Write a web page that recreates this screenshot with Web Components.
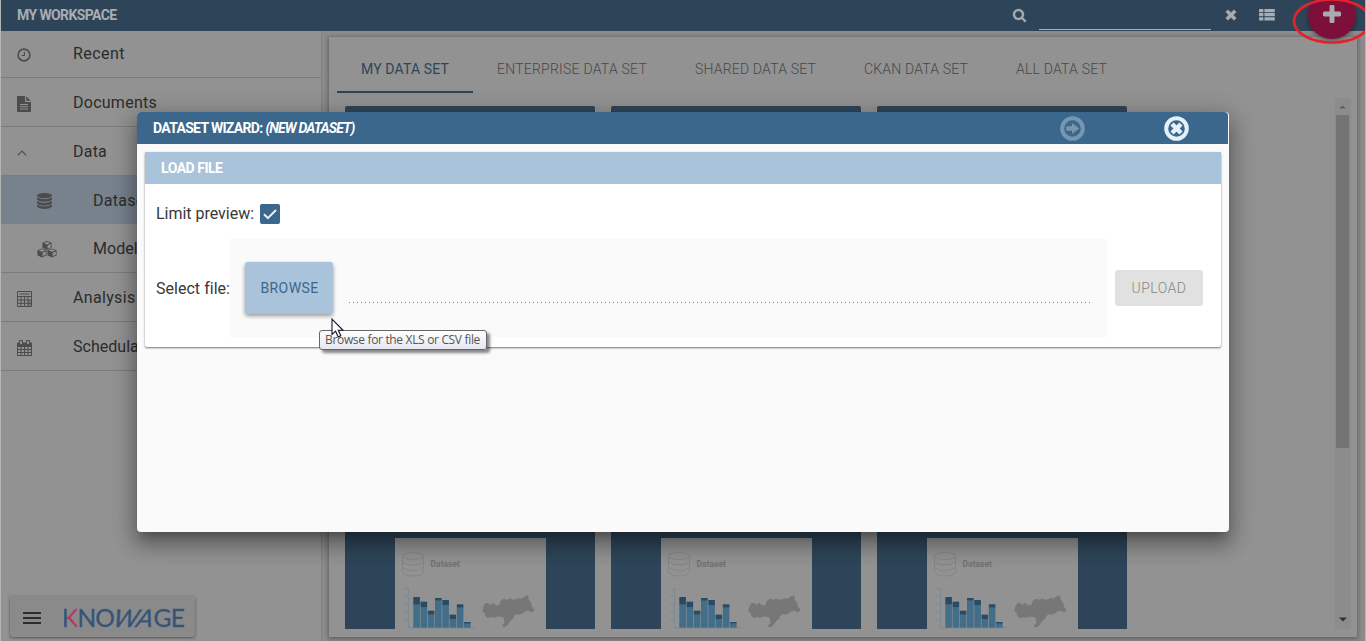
<!DOCTYPE html>
<html lang="en"><head><meta charset="utf-8"><title>My Workspace</title>
<style>html,body{margin:0;height:100%;overflow:hidden;background:#8e8e8e;font-family:Roboto,sans-serif}</style></head>
<body><workspace-app></workspace-app>
<script>
const define=(name,html,setup)=>customElements.define(name,class extends HTMLElement{
  connectedCallback(){ if(this.shadowRoot)return; const r=this.attachShadow({mode:'open'});
    const t=document.createElement('template'); t.innerHTML=typeof html==='function'?html(this):html;
    r.append(t.content.cloneNode(true)); if(setup)setup(this,r); }});

/* A single-line label whose tracking is adjusted to a given width. */
define('fit-text','<style>:host{display:inline-block;white-space:nowrap}</style><slot></slot>',el=>{
  const w=+el.getAttribute('w'); if(!w)return;
  el.style.letterSpacing='0px';
  el.style.letterSpacing=((w-el.getBoundingClientRect().width)/el.textContent.length).toFixed(3)+'px';
});

const cube=(x,y)=>`<g transform="translate(${x} ${y})"><path d="M5 0L9.6 1.8V6.8L5 9L.4 6.8V1.8z" fill="currentColor"/><path d="M5 .9L8.3 2.1L5 3.4L1.7 2.1z M5.6 4.4L8.8 3.1V6.2L5.6 7.8z" fill="#949494"/></g>`;
const ICONS={
 clock:['0 0 14 14','<circle cx="7" cy="7" r="5.9" fill="none" stroke="currentColor" stroke-width="1.6"/><path d="M7.4 3.8V7.5H4.7" fill="none" stroke="currentColor" stroke-width="1.1"/>'],
 file:['0 0 14 16','<path fill="currentColor" fill-rule="evenodd" d="M0 .8Q0 0 .8 0H8V5.1Q8 6 9 6H14V15.2Q14 16 13.2 16H.8Q0 16 0 15.2zM3 8V9H11V8zM3 10.3V11.3H11V10.3zM3 12.6V13.6H11V12.6zM9.2 .2L13.8 4.8H9.2z"/>'],
 chevron:['0 0 10 6','<path d="M.7 5.3L5 1L9.3 5.3" fill="none" stroke="currentColor" stroke-width="1.2"/>'],
 database:['0 0 14 16','<g fill="currentColor"><ellipse cx="7" cy="2.6" rx="7" ry="2.6"/><path d="M0 4.2Q3 6.2 7 6.2T14 4.200V6.600Q12.500 8.800 7 8.800T0 6.600z"/><path d="M0 8Q3 9.900 7 9.900T14 8V10.200Q12.500 12.400 7 12.400T0 10.200z"/><path d="M0 11.700Q3 13.500 7 13.500T14 11.700V13.600Q12.500 16 7 16T0 13.600z"/></g>'],
 cubes:['0 0 20 17',cube(5,0)+cube(0,7.4)+cube(10,7.4)],
 calc:['0 0 15 16','<path d="M.5 .5H14.500V15.500H.5zM.5 5.500H14.500M.5 9H14.500M.5 12.300H14.500M4 5.500V15.500M7.500 5.500V15.500M11 5.500V15.500M2.500 3H12.500" fill="none" stroke="currentColor"/><path d="M11 9H14.500V15.500H11z" fill="currentColor" opacity=".35"/>'],
 calendar:['0 0 15 16','<path d="M.5 3H14.500V15.500H.5zM.5 6.500H14.500M.5 9.500H14.500M.5 12.500H14.500M4 6.500V15.500M7.500 6.500V15.500M11 6.500V15.500" fill="none" stroke="currentColor"/><path d="M.5 3H14.500V6H.5z" fill="currentColor"/><path d="M2.500 .5H5.500V4.500H2.500zM9.500 .5H12.500V4.500H9.500z" fill="#929292" stroke="currentColor"/>'],
 search:['64 128 1664 1664','<path fill="currentColor" stroke="currentColor" stroke-width="40" d="M1216 832q0-185-131.5-316.5t-316.5-131.5-316.5 131.5-131.5 316.5 131.5 316.5 316.5 131.5 316.5-131.5 131.5-316.5zm512 832q0 52-38 90t-90 38q-54 0-90-38l-343-342q-179 124-399 124-143 0-273.5-55.5t-225-150-150-225-55.5-273.5 55.500-273.500 150-225 225-150 273.500-55.500 273.500 55.500 225 150 150 225 55.500 273.500q0 220-124 399l343 343q37 37 37 90z"/>'],
 times:['302 366 1188 1188','<path fill="currentColor" stroke="currentColor" stroke-width="60" d="M1490 1322q0 40-28 68l-136 136q-28 28-68 28t-68-28l-294-294-294 294q-28 28-68 28t-68-28l-136-136q-28-28-28-68t28-68l294-294-294-294q-28-28-28-68t28-68l136-136q28-28 68-28t68 28l294 294 294-294q28-28 68-28t68 28l136 136q28 28 28 68t-28 68l-294 294 294 294q28 28 28 68z"/>'],
 list:['0 0 16 12','<g fill="currentColor"><rect width="4.400" height="3.200" rx=".5"/><rect y="4.100" width="4.400" height="3.200" rx=".5"/><rect y="8.200" width="4.400" height="3.200" rx=".5"/><rect x="5.400" width="10.400" height="3.200" rx=".5"/><rect x="5.400" y="4.100" width="10.400" height="3.200" rx=".5"/><rect x="5.400" y="8.200" width="10.400" height="3.200" rx=".5"/></g>'],
 plus:['192 128 1408 1408','<path fill="currentColor" d="M1600 736v192q0 40-28 68t-68 28h-416v416q0 40-28 68t-68 28h-192q-40 0-68-28t-28-68v-416h-416q-40 0-68-28t-28-68v-192q0-40 28-68t68-28h416v-416q0-40 28-68t68-28h192q40 0 68 28t28 68v416h416q40 0 68 28t28 68z"/>'],
 next:['0 0 25 25','<circle cx="12.500" cy="12.500" r="10.300" fill="none" stroke="currentColor" stroke-width="4"/><path d="M6.300 10.200H12V7L19.300 12.500L12 18V14.800H6.300z" fill="currentColor"/>'],
 close:['0 0 25 25','<circle cx="12.500" cy="12.500" r="10.300" fill="none" stroke="currentColor" stroke-width="4"/><path d="M9.600 9.600L15.400 15.400M15.400 9.600L9.600 15.400" stroke="currentColor" stroke-width="4.500" stroke-linecap="square"/>'],
 check:['0 0 20 20','<path d="M4 10.300L7.900 14.200L16 6" fill="none" stroke="#e6f2fb" stroke-width="2"/>'],
 menu:['0 0 18 12','<path d="M0 1H18M0 6H18M0 11H18" stroke="currentColor" stroke-width="2"/>'],
 up:['0 0 8 5','<path d="M0 4.500L4 .5L8 4.500z" fill="currentColor"/>'],
 down:['0 0 8 5','<path d="M0 .5H8L4 4.500z" fill="currentColor"/>'],
 pointer:['0 0 13 21','<path d="M1 1V16.500L4.600 13.200L7.200 19L9.800 17.800L7.300 12.300H12z" fill="#fff" stroke="#111827" stroke-width="1.100"/>']
};
define('ui-icon',el=>{const [vb,body]=ICONS[el.getAttribute('name')];
 return `<style>:host{display:block;flex:none;width:${el.getAttribute('w')}px;height:${el.getAttribute('h')}px}svg{display:block;width:100%;height:100%;overflow:visible}</style><svg viewBox="${vb}" preserveAspectRatio="none" aria-hidden="true">${body}</svg>`});

define('nav-row',el=>`<style>:host{display:flex;box-sizing:border-box;height:49px;border-bottom:1px solid #7c7c7c;align-items:center;color:#4c4c4c;padding-left:16px;font-size:16px}
 :host([first]){height:47px}:host([sub]){padding-left:36px}
 :host([active]){background:#77828c;border-color:#77828c;height:48px}
 .i{width:56px;padding-top:3px}span{color:#2c2c2c}:host([first]) .i{padding-top:2px}:host([first]) span{padding-bottom:2px}:host([active]) span{padding-top:1px}</style>
 <div class="i"><ui-icon name="${el.getAttribute('icon')}" w="${el.getAttribute('iw')}" h="${el.getAttribute('ih')}"></ui-icon></div><span><slot></slot></span>`);

define('brand-bar',`<style>:host{display:flex;box-sizing:border-box;width:185px;height:41px;background:#8a8a8a;border-radius:3px;box-shadow:0 1px 3px #444c;align-items:center;padding:2px 0 0 13px;color:#2c2c2c}
 .logo{margin-left:21px;font:400 24.500px/26px Lato,sans-serif;color:#355478;white-space:nowrap;-webkit-text-stroke:.3px #355478}
 .k{color:transparent;-webkit-text-stroke:.3px transparent;background:linear-gradient(90deg,#355478 5px,#b43868 5px);-webkit-background-clip:text;background-clip:text}
 .w{display:inline-block;transform:skewX(-20deg)}</style>
 <ui-icon name="menu" w="18" h="12"></ui-icon><fit-text class="logo" w="122"><span class="k">K</span>NO<span class="w">WA</span>GE</fit-text>`);

define('side-nav',`<style>:host{display:flex;flex-direction:column;box-sizing:border-box;width:321px;background:#929292;border-right:1px solid #818181}
 nav{flex:1}brand-bar{margin:0 0 4px 9px}</style><nav>
 <nav-row first icon="clock" iw="14" ih="14"><fit-text w="52">Recent</fit-text></nav-row>
 <nav-row icon="file" iw="14" ih="16"><fit-text w="84">Documents</fit-text></nav-row>
 <nav-row icon="chevron" iw="10" ih="6"><fit-text w="34">Data</fit-text></nav-row>
 <nav-row sub active icon="database" iw="15" ih="16"><fit-text w="57">Dataset</fit-text></nav-row>
 <nav-row sub icon="cubes" iw="20" ih="17"><fit-text w="53">Models</fit-text></nav-row>
 <nav-row icon="calc" iw="15" ih="16"><fit-text w="62.500">Analysis</fit-text></nav-row>
 <nav-row icon="calendar" iw="15" ih="16"><fit-text w="93">Schedulation</fit-text></nav-row></nav><brand-bar></brand-bar>`);

define('top-bar',`<style>:host{display:flex;height:31px;background:#2e4559;color:#a9adb1;align-items:center;padding-left:16px;flex:none}
 b{font-weight:700;font-size:14px;margin-right:auto;padding-bottom:1px}.line{width:172px;height:29px;border-bottom:1px solid #adb1b5;margin:-1px 15px 0 13px}
 ui-icon{margin-bottom:1px}.x{margin-right:23px}.l{margin-right:33px}
 .fab{width:48px;height:48px;border-radius:50%;background:#7c103a;display:grid;place-items:center;margin-right:9px;box-shadow:0 2px 4px #0006;position:relative;z-index:2;align-self:flex-start;margin-top:-9px;box-sizing:border-box;padding-bottom:2px;color:#aaa;flex:none}</style>
 <b><fit-text w="99.500">MY WORKSPACE</fit-text></b><ui-icon name="search" w="13" h="13"></ui-icon><div class="line"></div>
 <ui-icon class="x" name="times" w="10" h="10"></ui-icon><ui-icon class="l" name="list" w="16" h="12"></ui-icon>
 <div class="fab"><ui-icon name="plus" w="18" h="18"></ui-icon></div>`);

const tops=[[231,254],[245,262],[272,284],[234,242],[240,256],[284,297],[253,263],[306,311]];
const bars=tops.map(([a,b],i)=>{const x=18.3+i*7.25;return `<rect x="${x}" y="${b/3-18}" width="6.600" height="${107.7-b/3}" fill="#426e89"/><rect x="${x}" y="${a/3-18}" width="6.600" height="${(b-a)/3}" fill="#274a65"/>`}).join('');
define('dataset-tile',`<style>:host{display:flex;flex-direction:column;width:250px;background:#2e4559;border-radius:2px 2px 0 0;align-items:center;justify-content:flex-end}svg{display:block;background:#929292;margin-left:1px}</style>
 <svg width="151" height="91" viewBox="0 0 151 91"><g fill="none" stroke="#858585"><ellipse cx="18" cy="18" rx="10.500" ry="3.500"/><path d="M7.500 18V34Q10 38 18 38T28.500 34V18M7.500 23Q10 27 18 27T28.500 23M7.500 28.500Q10 32.500 18 32.500T28.500 28.500"/></g>
 <text x="35.500" y="29" font-family="Roboto,sans-serif" font-size="8.500" font-weight="700" fill="#707070" textLength="29.500">Dataset</text>
 <path d="M13.500 50V89.800H80M9 51H13M9 58H13M9 66H13M9 74H13M9 82H13" fill="none" stroke="#7c8a91"/>${bars}
 <path transform="translate(-4.5 -18) scale(.3333)" fill="#777" stroke="#777" stroke-width="3" stroke-linejoin="round" d="M279 262L284 252L292 250L300 256L308 250L318 258L328 256L332 243L340 238L350 241L358 237L370 241L385 236L394 237L402 231L412 227L413 238L420 248L423 260L431 270L424 276L414 271L402 274L398 279L385 283L378 281L369 289L366 297L358 303L350 315L340 321L336 318L343 308L342 298L338 290L320 288L312 292L302 290L292 293L284 286L285 279L277 274z"/></svg>`);

define('tab-strip',`<style>:host{display:flex;height:56px;padding-left:8px;color:#484848;font-size:14px;font-weight:300}
 div{padding:0 24px;display:flex;align-items:center;box-sizing:border-box;padding-top:8px}.on{color:#2e4559;border-bottom:2px solid #2e4559;padding-top:10px;font-weight:400}</style>
 <div class="on"><fit-text w="88">MY DATA SET</fit-text></div><div><fit-text w="150">ENTERPRISE DATA SET</fit-text></div><div><fit-text w="121">SHARED DATA SET</fit-text></div><div><fit-text w="104">CKAN DATA SET</fit-text></div><div><fit-text w="91">ALL DATA SET</fit-text></div>`);

define('scroll-rail',`<style>:host{display:flex;flex-direction:column;align-items:center;box-sizing:border-box;width:16px;background:#8c8c8c;padding:7px 1px 7px 0;color:#5f5f5f}
 .thumb{width:13px;height:333px;background:#747474;margin-top:6px}.end{margin-top:auto;color:#2f2f2f}</style>
 <ui-icon name="up" w="7" h="4"></ui-icon><div class="thumb"></div><ui-icon class="end" name="down" w="8" h="5"></ui-icon>`);

define('data-panel',`<style>:host{display:flex;flex-direction:column;flex:1;margin:6px 8px 4px 7px;background:#929292;box-shadow:0 1px 4px 1px #4449}
 .body{display:flex;flex:1;padding:5px 6px 8px 16px;justify-content:space-between}.grid{display:grid;grid-template-columns:repeat(3,250px);grid-template-rows:244px 271px;gap:8px 16px;padding-top:8px}</style>
 <tab-strip></tab-strip><div class="body"><div class="grid">${'<dataset-tile></dataset-tile>'.repeat(6)}</div><scroll-rail></scroll-rail></div>`);

define('load-card',`<style>:host{display:block;margin:8px 8px 0;height:195px;background:#fff;box-shadow:0 1px 2px #0008;border-radius:2px;color:#383838;font-size:16px}
 h2{margin:0;height:32px;background:#a9c3da;color:#fff;font-size:14px;display:flex;align-items:center;padding-left:16px;font-weight:700}
 .limit{height:20px;margin:20px 0 15px 11px;display:flex;align-items:center;gap:6px}.limit fit-text{margin-top:-1px}
 .box{width:20px;height:20px;border-radius:2px;background:#3b678c}
 .file{display:flex;height:98px;align-items:center;padding-left:11px}.zone{display:flex;box-sizing:border-box;width:877px;height:98px;background:#fafafa;padding:23px 15px}
 .btn{width:88px;height:52px;display:grid;place-items:center;background:#a9c3da;border-radius:3px;box-shadow:0 2px 4px #0006;color:#3b678c;font-size:14px;padding-left:1px;box-sizing:border-box}
 .line{width:742px;height:40px;margin-left:16px;align-self:flex-start;padding-bottom:1px;background:repeating-linear-gradient(90deg,#888 0 1px,transparent 1px 4px) left bottom/100% 1px no-repeat}
 .up{margin-left:8px;width:88px;height:36px;display:grid;place-items:center;background:#e1e1e1;color:#868686;border-radius:3px;font-size:14px;font-weight:300}</style>
 <h2><fit-text w="61.500">LOAD FILE</fit-text></h2><div class="limit"><fit-text w="98">Limit preview:</fit-text><ui-icon class="box" name="check" w="20" h="20"></ui-icon></div>
 <div class="file"><fit-text w="73.400">Select file:</fit-text><div class="zone"><div class="btn"><fit-text w="58">BROWSE</fit-text></div><div class="line"></div></div><div class="up"><fit-text w="55">UPLOAD</fit-text></div></div>`);

define('wizard-dialog',`<style>:host{display:block;position:absolute;left:137px;top:112px;width:1092px;height:420px;background:#fafafa;border-radius:4px;box-shadow:0 7px 8px -4px #0003,0 13px 19px 2px #00000038,0 5px 24px 4px #0003;z-index:3}
 header{height:32px;margin-right:1px;background:#3b678c;color:#fff;display:flex;align-items:center;padding-left:16px;font-size:14px;font-weight:700;border-radius:4px 4px 0 0}
 .t{margin-right:auto;display:flex;gap:3px}.n{color:#7597b0;margin-right:79px}.c{color:#e6f0f8;margin-right:39px}i{font-style:italic}</style>
 <header><div class="t"><fit-text w="109.500">DATASET WIZARD:</fit-text><i><fit-text w="89">(NEW DATASET)</fit-text></i></div><ui-icon class="n" name="next" w="25" h="25"></ui-icon><ui-icon class="c" name="close" w="25" h="25"></ui-icon></header><load-card></load-card>`);

define('hover-tip',`<style>:host{position:absolute;left:319px;top:330px;z-index:4;box-sizing:border-box;width:168px;height:20px;border:1px solid #666;border-radius:3px;background:linear-gradient(#fff,#e6e7f1);box-shadow:3px 3px 3px #0007;color:#555;font:12px/18px "Open Sans",sans-serif;padding-left:5px}
 ui-icon{position:absolute;left:11px;top:-13px}</style><fit-text w="155">Browse for the XLS or CSV file</fit-text><ui-icon name="pointer" w="13" h="21"></ui-icon>`);

define('mark-ring',`<style>:host{position:absolute;left:1290px;top:-3px;width:76px;height:50px;z-index:5;overflow:hidden}svg{display:block}</style><svg width="90" height="50"><ellipse cx="42" cy="24" rx="38" ry="21.500" fill="none" stroke="#e4222b" stroke-width="2.700"/></svg>`);

define('workspace-app',`<style>:host{display:flex;flex-direction:column;position:relative;box-sizing:border-box;width:1366px;height:641px;overflow:hidden;background:#8c8c8c;border-left:1px solid #b5b5b5;border-right:1px solid #b5b5b5}
 main{display:flex;flex:1;min-height:0}.over{position:absolute;left:-1px;top:0}</style>
 <top-bar></top-bar><main><side-nav></side-nav><data-panel></data-panel></main><div class="over"><wizard-dialog></wizard-dialog><hover-tip></hover-tip><mark-ring></mark-ring></div>`);
</script></body></html>
